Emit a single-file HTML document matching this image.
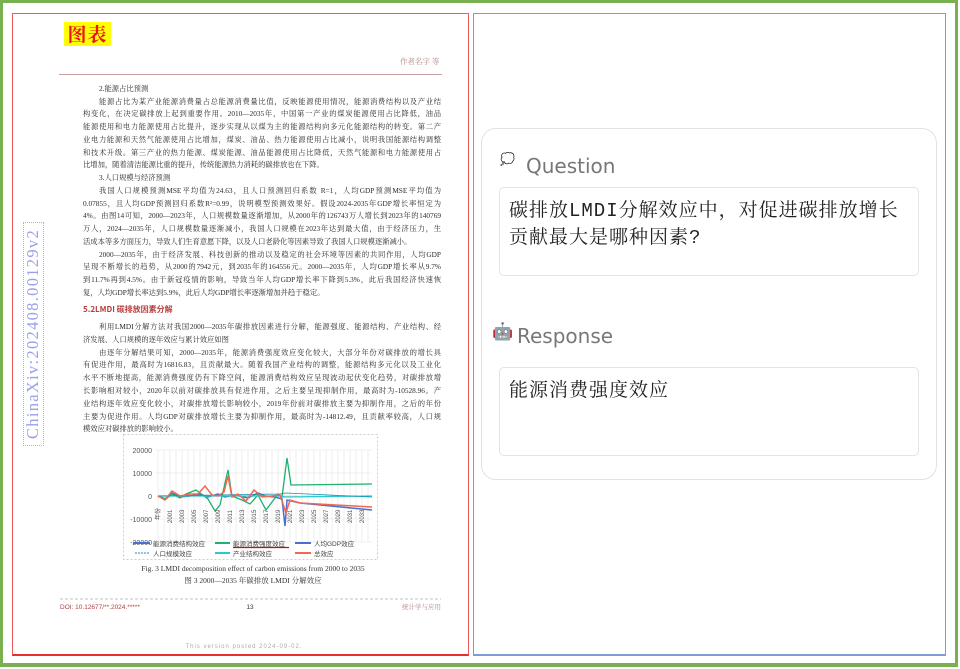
<!DOCTYPE html>
<html><head><meta charset="utf-8"><style>
*{margin:0;padding:0;box-sizing:border-box}
body{width:960px;height:669px;background:#fff;position:relative;overflow:hidden;font-family:"Liberation Serif","Noto Serif CJK SC",serif}
.abs{position:absolute}
.ln{position:absolute;left:83px;width:358px;font-size:7.3px;line-height:9px;color:#2a2a2a;white-space:nowrap;text-align:justify;text-align-last:justify;overflow:hidden;height:10px}
.in{left:99px;width:342px}
.sh{text-align-last:auto}
</style></head><body>
<div class="abs" style="left:0;top:0;width:958px;height:667px;border:3px solid #79b050;border-bottom-width:4px"></div>
<div class="abs" style="left:12px;top:13px;width:457px;height:643px;border:1.5px solid #ee5a5a;border-bottom-color:#e53030;border-bottom-width:2px"></div>
<div class="abs" style="left:473px;top:13px;width:473px;height:643px;border:1.5px solid #7d9bd6;border-bottom-width:2px"></div>
<div class="abs" style="left:64px;top:22px;width:47px;height:24px;background:#ffff00;color:#e8141e;font:bold 19px 'Noto Serif CJK SC',serif;line-height:24px;text-align:center;letter-spacing:1px">图表</div>
<div class="abs" style="left:400px;top:56px;font-size:7.5px;color:#b08080;font-family:'Noto Serif CJK SC',serif">作者名字 等</div>
<div class="abs" style="left:59px;top:74px;width:383px;height:1px;background:#c8a0a0"></div>
<div class="abs" style="left:23px;top:222px;width:21px;height:224px;border:1.5px dotted #5ad8e8"></div>
<div class="abs" style="left:33px;top:334px;transform:translate(-50%,-50%) rotate(-90deg);font-size:16.5px;color:#9aa0ea;white-space:nowrap;letter-spacing:1.3px">ChinaXiv:202408.00129v2</div>

<div class="ln in sh" style="top:84px">2.能源占比预测</div>
<div class="ln in" style="top:97px">能源占比为某产业能源消费量占总能源消费量比值，反映能源使用情况，能源消费结构以及产业结</div>
<div class="ln" style="top:109px">构变化，在决定碳排放上起到重要作用。2010—2035年，中国第一产业的煤炭能源使用占比降低，油品</div>
<div class="ln" style="top:122px">能源使用和电力能源使用占比提升，逐步实现从以煤为主的能源结构向多元化能源结构的转变。第二产</div>
<div class="ln" style="top:135px">业电力能源和天然气能源使用占比增加，煤炭、油品、热力能源使用占比减小，说明我国能源结构调整</div>
<div class="ln" style="top:148px">和技术升级。第三产业的热力能源、煤炭能源、油品能源使用占比降低，天然气能源和电力能源使用占</div>
<div class="ln sh" style="top:160px">比增加，随着清洁能源比重的提升，传统能源热力消耗的碳排放也在下降。</div>
<div class="ln in sh" style="top:173px">3.人口规模与经济预测</div>
<div class="ln in" style="top:186px">我国人口规模预测MSE平均值为24.63，且人口预测回归系数 R=1，人均GDP预测MSE平均值为</div>
<div class="ln" style="top:199px">0.07855，且人均GDP预测回归系数R²=0.99，说明模型预测效果好。假设2024-2035年GDP增长率恒定为</div>
<div class="ln" style="top:211px">4%。由图14可知，2000—2023年，人口规模数量逐渐增加，从2000年的126743万人增长到2023年的140769</div>
<div class="ln" style="top:224px">万人，2024—2035年，人口规模数量逐渐减小，我国人口规模在2023年达到最大值，由于经济压力，生</div>
<div class="ln sh" style="top:237px">活成本等多方面压力，导致人们生育意愿下降，以及人口老龄化等因素导致了我国人口规模逐渐减小。</div>
<div class="ln in" style="top:250px">2000—2035年，由于经济发展、科技创新的推动以及稳定的社会环境等因素的共同作用，人均GDP</div>
<div class="ln" style="top:262px">呈现不断增长的趋势，从2000的7942元，到2035年的164556元。2000—2035年，人均GDP增长率从9.7%</div>
<div class="ln" style="top:275px">到11.7%再到4.5%。由于新冠疫情的影响，导致当年人均GDP增长率下降到5.3%，此后我国经济快速恢</div>
<div class="ln sh" style="top:288px">复，人均GDP增长率达到5.9%，此后人均GDP增长率逐渐增加并趋于稳定。</div>
<div class="abs" style="left:83px;top:304px;font:bold 8px 'Noto Sans CJK SC',sans-serif;color:#b83c3c">5.2LMDI 碳排放因素分解</div>
<div class="ln in" style="top:322px">利用LMDI分解方法对我国2000—2035年碳排放因素进行分解，能源强度、能源结构、产业结构、经</div>
<div class="ln sh" style="top:335px">济发展、人口规模的逐年效应与累计效应如图</div>
<div class="ln in" style="top:348px">由逐年分解结果可知，2000—2035年，能源消费强度效应变化较大，大部分年份对碳排放的增长具</div>
<div class="ln" style="top:360px">有促进作用，最高时为16816.83，且贡献最大。随着我国产业结构的调整，能源结构多元化以及工业化</div>
<div class="ln" style="top:373px">水平不断地提高，能源消费强度仍有下降空间，能源消费结构效应呈现波动起伏变化趋势，对碳排放增</div>
<div class="ln" style="top:386px">长影响相对较小，2020年以前对碳排放具有促进作用，之后主要呈现抑制作用，最高时为-10528.96。产</div>
<div class="ln" style="top:399px">业结构逐年效应变化较小，对碳排放增长影响较小，2019年份前对碳排放主要为抑制作用，之后的年份</div>
<div class="ln" style="top:412px">主要为促进作用。人均GDP对碳排放增长主要为抑制作用，最高时为-14812.49，且贡献率较高，人口规</div>
<div class="ln sh" style="top:424px">模效应对碳排放的影响较小。</div>

<svg class="abs" style="left:0;top:0" width="480" height="669" font-family="Liberation Sans,Noto Sans CJK SC,sans-serif">
<rect x="123.5" y="434.5" width="254" height="125" fill="none" stroke="#ccc" stroke-dasharray="2,2"/>
<g stroke="#e4e4e4" stroke-width="0.6">
<line x1="155" y1="450" x2="372" y2="450"/><line x1="155" y1="473" x2="372" y2="473"/><line x1="155" y1="519" x2="372" y2="519"/><line x1="155" y1="542" x2="372" y2="542"/>
<path d="M158 450V542M164 450V542M170 450V542M176 450V542M182 450V542M188 450V542M194 450V542M200 450V542M206 450V542M212 450V542M218 450V542M224 450V542M230 450V542M236 450V542M242 450V542M248 450V542M254 450V542M260 450V542M266 450V542M272 450V542M278 450V542M284 450V542M290 450V542M296 450V542M302 450V542M308 450V542M314 450V542M320 450V542M326 450V542M332 450V542M338 450V542M344 450V542M350 450V542M356 450V542M362 450V542M368 450V542"/>
</g>
<g font-size="7" fill="#555" text-anchor="end"><text x="152" y="453">20000</text><text x="152" y="476">10000</text><text x="152" y="499">0</text><text x="152" y="522">-10000</text><text x="152" y="545">-20000</text></g>
<line x1="157" y1="496" x2="372" y2="496" stroke="#bbb" stroke-width="0.6"/>
<path d="M158 496 L165 499 172 493 180 497 190 496 200 494 208 497 218 494 225 497 235 495 248 498 258 493 265 496 275 497 282 499 285 526 287 500 300 503 372 510" fill="none" stroke="#4a6fd0" stroke-width="1.5"/>
<path d="M158 496 L166 499 172 494 180 498 186 494 196 490 208 499 215 511 220 505 228 470 232 496 242 500 250 504 258 495 266 510 278 494 282 497 287 458 291 485 372 484" fill="none" stroke="#20b070" stroke-width="1.3"/>
<path d="M158 496 L280 496 285 497 372 496" fill="none" stroke="#2ac8d0" stroke-width="1.2"/>
<path d="M158 496 L280 494 286 493 372 497" fill="none" stroke="#1090b0" stroke-width="0.8"/>
<path d="M158 496 L165 500 172 491 180 496 190 494 198 494 205 486 212 495 218 496 224 492 228 476 232 497 238 494 246 501 254 490 262 497 272 496 280 495 286 513 290 500 300 503 372 507" fill="none" stroke="#f06850" stroke-width="1.5"/>
<g font-size="6" fill="#555"><text transform="translate(160,520) rotate(-90)">年份</text>
<text transform="translate(172,523) rotate(-90)">2001</text><text transform="translate(184,523) rotate(-90)">2003</text><text transform="translate(196,523) rotate(-90)">2005</text><text transform="translate(208,523) rotate(-90)">2007</text><text transform="translate(220,523) rotate(-90)">2009</text><text transform="translate(232,523) rotate(-90)">2011</text><text transform="translate(244,523) rotate(-90)">2013</text><text transform="translate(256,523) rotate(-90)">2015</text><text transform="translate(268,523) rotate(-90)">2017</text><text transform="translate(280,523) rotate(-90)">2019</text><text transform="translate(292,523) rotate(-90)">2021</text><text transform="translate(304,523) rotate(-90)">2023</text><text transform="translate(316,523) rotate(-90)">2025</text><text transform="translate(328,523) rotate(-90)">2027</text><text transform="translate(340,523) rotate(-90)">2029</text><text transform="translate(352,523) rotate(-90)">2031</text><text transform="translate(364,523) rotate(-90)">2033</text></g>
<g font-size="6.5" fill="#444">
<line x1="133" y1="543" x2="150" y2="543" stroke="#4a6fd0" stroke-width="2"/><text x="153" y="546">能源消费结构效应</text>
<line x1="215" y1="543" x2="230" y2="543" stroke="#20b070" stroke-width="2"/><text x="233" y="546">能源消费强度效应</text>
<line x1="233" y1="547.5" x2="289" y2="547.5" stroke="#c01010" stroke-width="1.2"/>
<line x1="295" y1="543" x2="311" y2="543" stroke="#4a6fd0" stroke-width="2"/><text x="314" y="546">人均GDP效应</text>
<line x1="135" y1="553" x2="150" y2="553" stroke="#1090b0" stroke-width="1" stroke-dasharray="2,1"/><text x="153" y="556">人口规模效应</text>
<line x1="215" y1="553" x2="230" y2="553" stroke="#2ac8d0" stroke-width="2"/><text x="233" y="556">产业结构效应</text>
<line x1="295" y1="553" x2="311" y2="553" stroke="#f06850" stroke-width="2"/><text x="314" y="556">总效应</text>
</g>
<text x="253" y="571" font-family="Liberation Serif,serif" font-size="7.5" fill="#333" text-anchor="middle">Fig. 3 LMDI decomposition effect of carbon emissions from 2000 to 2035</text>
<text x="253" y="583" font-family="Liberation Serif,Noto Serif CJK SC,serif" font-size="7.5" fill="#333" text-anchor="middle">图 3 2000—2035 年碳排放 LMDI 分解效应</text>
<line x1="60" y1="599" x2="441" y2="599" stroke="#888" stroke-width="0.6" stroke-dasharray="3,2"/>
<text x="60" y="609" font-size="6.5" fill="#b04040">DOI: 10.12677/**.2024.*****</text>
<text x="250" y="609" font-size="6.5" fill="#333" text-anchor="middle">13</text>
<text x="441" y="609" font-size="6.5" fill="#b08080" text-anchor="end" font-family="Noto Serif CJK SC,serif">统计学与应用</text>
<text x="244" y="648" font-size="6" fill="#aaa" text-anchor="middle" letter-spacing="1">This version posted 2024-09-02.</text>
</svg>

<div class="abs" style="left:481px;top:128px;width:456px;height:352px;border:1px solid #e2e2e2;border-radius:15px"></div>
<div class="abs" style="left:500px;top:152px;font-size:12px;color:#bbb">💭</div>
<div class="abs" style="left:526px;top:154px;font:20px 'DejaVu Sans','Liberation Sans',sans-serif;color:#777">Question</div>
<div class="abs" style="left:499px;top:187px;width:420px;height:89px;border:1px solid #e4e4e4;border-radius:5px;padding:10px 9px;font:19px/27px 'Liberation Mono','Noto Serif CJK SC',serif;color:#222;letter-spacing:1px">碳排放LMDI分解效应中，对促进碳排放增长贡献最大是哪种因素?</div>
<div class="abs" style="left:492px;top:322px;font-size:17px">🤖</div>
<div class="abs" style="left:517px;top:324px;font:20px 'DejaVu Sans','Liberation Sans',sans-serif;color:#777">Response</div>
<div class="abs" style="left:499px;top:367px;width:420px;height:89px;border:1px solid #e4e4e4;border-radius:5px;padding:8px 9px;font:19px/26px 'Noto Serif CJK SC',serif;color:#222;letter-spacing:1px">能源消费强度效应</div>
</body></html>
